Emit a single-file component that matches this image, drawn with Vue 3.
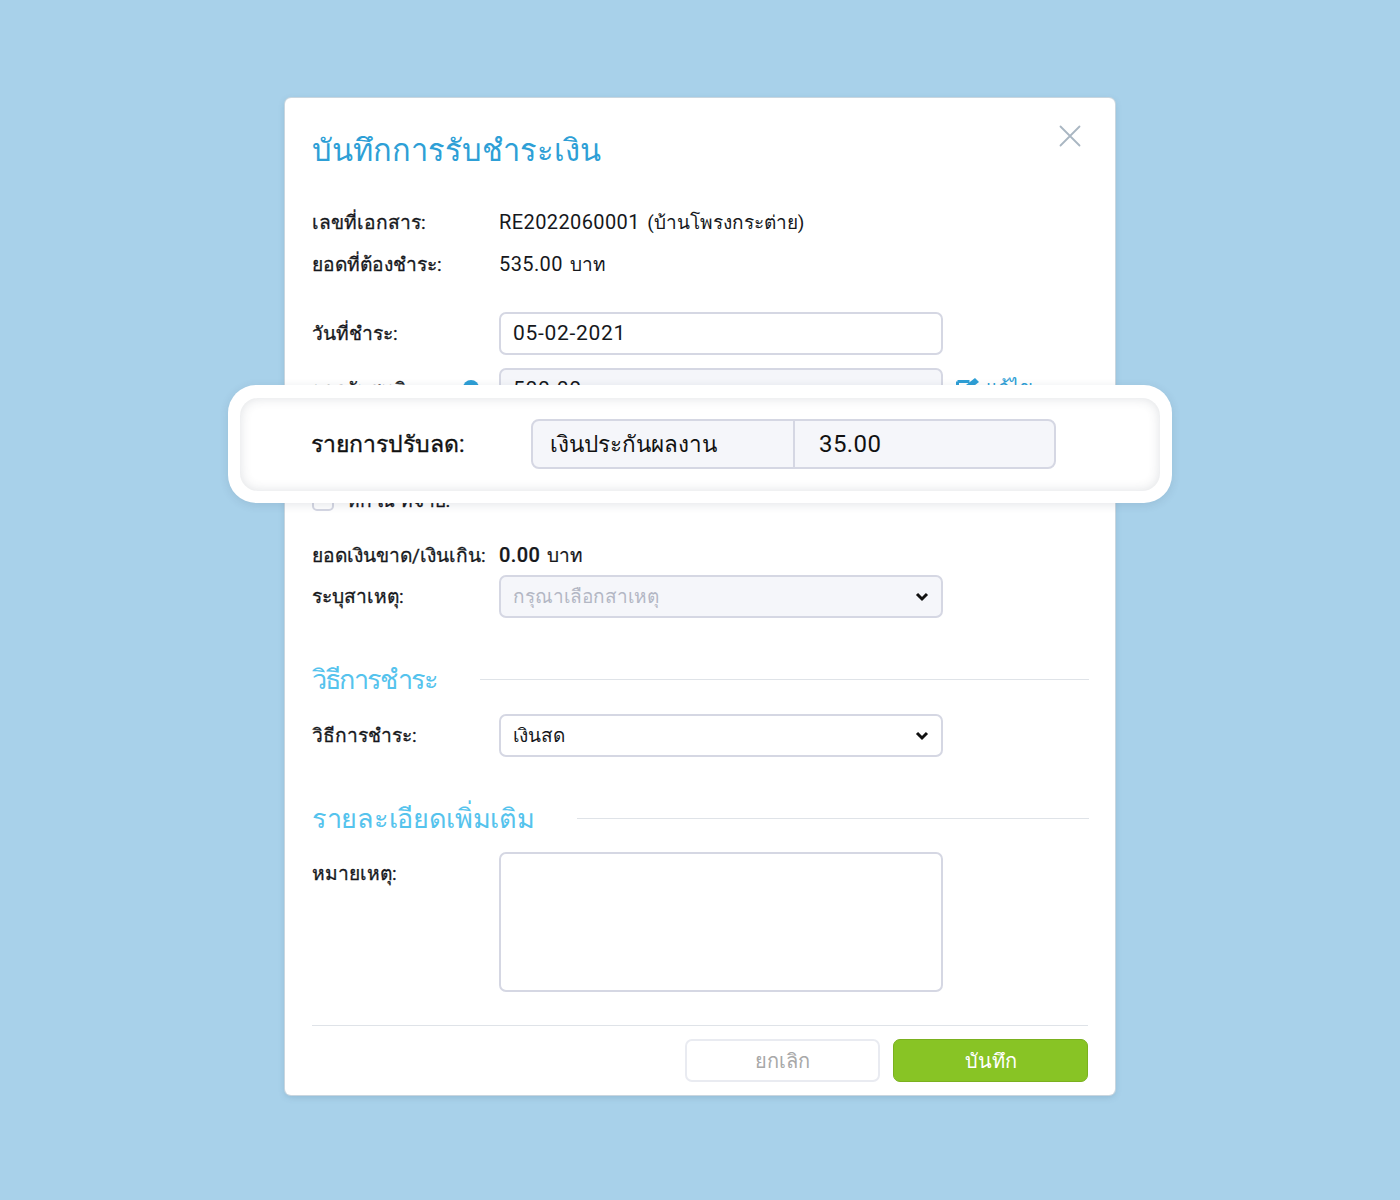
<template>
  <div class="page">
    <div class="modal">
      <div class="head">
        <h1 class="title">บันทึกการรับชำระเงิน</h1>
        <svg class="close" width="24" height="24" viewBox="0 0 24 24">
          <path d="M2.5 2.5 L21.5 21.5 M21.5 2.5 L2.5 21.5" stroke="#a9b6c2" stroke-width="1.8" fill="none" stroke-linecap="round" />
        </svg>
      </div>

      <div class="info">
        <div class="info-row">
          <span class="label">เลขที่เอกสาร:</span>
          <span class="value">RE2022060001 <span class="th">(บ้านโพรงกระต่าย)</span></span>
        </div>
        <div class="info-row">
          <span class="label">ยอดที่ต้องชำระ:</span>
          <span class="value">535.00 <span class="th">บาท</span></span>
        </div>
      </div>

      <div class="row date-row">
        <span class="label">วันที่ชำระ:</span>
        <div class="field">05-02-2021</div>
      </div>
      <div class="row">
        <span class="label net-label">ยอดรับสุทธิ: <i class="dot"></i></span>
        <div class="field disabled">500.00</div>
        <a class="edit">
          <svg width="24" height="20" viewBox="0 0 24 20">
            <path d="M1.5 4.5h12M1.5 4.5v14h15v-8" stroke="#2e9fd6" stroke-width="3" fill="none" />
            <path d="M9 12l1-4 9-7 4 4-9 7z" fill="#2e9fd6" />
          </svg>
          แก้ไข
        </a>
      </div>
      <!-- this row sits fully under the highlight strip -->
      <div class="row">
        <span class="label"></span>
        <div class="field disabled"></div>
      </div>
      <div class="check-row">
        <span class="checkbox"></span>
        <span class="label">หัก ณ ที่จ่าย:</span>
      </div>

      <div class="info-row diff-row">
        <span class="label">ยอดเงินขาด/เงินเกิน:</span>
        <span class="value strong">0.00 <span class="th">บาท</span></span>
      </div>
      <div class="row reason-row">
        <span class="label">ระบุสาเหตุ:</span>
        <div class="field disabled select placeholder">
          กรุณาเลือกสาเหตุ
          <svg class="chev" width="14" height="10" viewBox="0 0 14 10">
            <path d="M2 2l5 5 5-5" stroke="#111" stroke-width="3" fill="none" />
          </svg>
        </div>
      </div>

      <div class="section method-head">
        <h2>วิธีการชำระ</h2>
        <span class="rule"></span>
      </div>
      <div class="row">
        <span class="label">วิธีการชำระ:</span>
        <div class="field select">
          เงินสด
          <svg class="chev" width="14" height="10" viewBox="0 0 14 10">
            <path d="M2 2l5 5 5-5" stroke="#111" stroke-width="3" fill="none" />
          </svg>
        </div>
      </div>

      <div class="section detail-head">
        <h2>รายละเอียดเพิ่มเติม</h2>
        <span class="rule"></span>
      </div>
      <div class="row note-row">
        <span class="label note-label">หมายเหตุ:</span>
        <div class="field note"></div>
      </div>

      <div class="foot">
        <button class="btn cancel">ยกเลิก</button>
        <button class="btn save">บันทึก</button>
      </div>

      <div class="highlight">
        <div class="highlight-inner">
          <span class="hl-label">รายการปรับลด:</span>
          <div class="hl-group">
            <div class="hl-cell hl-name">เงินประกันผลงาน</div>
            <div class="hl-cell hl-amount">35.00</div>
          </div>
        </div>
      </div>
    </div>
  </div>
</template>

<script setup>
</script>

<style scoped>
.page {
  width: 1400px;
  height: 1200px;
  background: #a8d1ea;
  padding-top: 98px;
  box-sizing: border-box;
  font-family: Roboto, "Noto Sans", sans-serif;
  color: #16181c;
}
.modal {
  position: relative;
  width: 830px;
  height: 997px;
  margin-left: 285px;
  box-sizing: border-box;
  padding: 0 27px;
  background: #fff;
  border-radius: 6px;
  box-shadow: 0 0 0 1px #c9d6df, 0 2px 6px rgba(70, 110, 140, 0.25);
}
.head {
  display: flex;
  justify-content: space-between;
  align-items: flex-start;
  height: 109px;
}
.title {
  margin: 29px 0 0;
  font-size: 30.8px;
  line-height: 48px;
  font-weight: 400;
  color: #2e9fd6;
}
.close {
  margin: 26px 6px 0 0;
}
.info {
  display: flex;
  flex-direction: column;
  gap: 12px;
}
.info-row {
  display: flex;
  align-items: center;
  height: 30px;
}
.label {
  width: 187px;
  flex-shrink: 0;
  font-size: 19.2px;
  font-weight: 400;
  -webkit-text-stroke: 0.3px #16181c;
  white-space: nowrap;
}
.row .label {
  margin-top: -2px;
}
.value {
  font-size: 20px;
  letter-spacing: 0.4px;
  word-spacing: 2px;
}
.value.strong {
  font-weight: 500;
  word-spacing: 1px;
  -webkit-text-stroke: 0.2px #16181c;
}
.th {
  font-size: 19px;
  letter-spacing: 0;
}
.row {
  display: flex;
  align-items: center;
  margin-bottom: 13px;
}
.date-row {
  margin-top: 33px;
}
.net-label {
  position: relative;
}
.dot {
  position: absolute;
  right: 20px;
  top: 6px;
  width: 16px;
  height: 16px;
  border-radius: 50%;
  background: #2e9fd6;
}
.field {
  position: relative;
  display: flex;
  align-items: center;
  box-sizing: border-box;
  width: 444px;
  height: 43px;
  padding: 0 12px 2px;
  border: 2px solid #d5d7e3;
  border-radius: 7px;
  background: #fff;
  font-size: 21px;
  letter-spacing: 0.7px;
}
.disabled {
  background: #f5f6fa;
}
.select {
  font-size: 19px;
  letter-spacing: 0;
}
.placeholder {
  color: #b3b7c4;
}
.chev {
  position: absolute;
  right: 12px;
  top: 15px;
}
.edit {
  display: flex;
  align-items: center;
  gap: 6px;
  margin: -6px 0 0 13px;
  font-size: 19px;
  color: #2e9fd6;
}
.check-row {
  display: flex;
  align-items: center;
  gap: 13px;
  height: 22px;
  margin-top: 22px;
}
.checkbox {
  width: 22px;
  height: 22px;
  box-sizing: border-box;
  border: 2px solid #d5d7e3;
  border-radius: 5px;
}
.diff-row {
  margin-top: 29px;
  margin-bottom: 5px;
}
.reason-row {
  margin-bottom: 0;
}
.section {
  display: flex;
  align-items: center;
  height: 48px;
}
.section h2 {
  margin: 0;
  font-size: 27px;
  font-weight: 400;
  color: #55c3ed;
  white-space: nowrap;
}
.rule {
  flex: 1;
  height: 1px;
  margin: 0 -1px 0 42px;
  background: #dfe3e8;
}
.method-head {
  margin-top: 37px;
  margin-bottom: 11px;
}
.method-head h2 {
  letter-spacing: -1.8px;
}
.detail-head {
  margin-top: 37px;
  margin-bottom: 10px;
}
.detail-head h2 {
  letter-spacing: -0.3px;
}
.note-row {
  align-items: flex-start;
  margin-bottom: 0;
}
.row .note-label {
  margin-top: 6px;
}
.note {
  height: 140px;
}
.foot {
  display: flex;
  justify-content: flex-end;
  gap: 13px;
  margin-top: 33px;
  padding-top: 13px;
  border-top: 1px solid #dfe3e8;
}
.btn {
  width: 195px;
  height: 43px;
  border-radius: 7px;
  font-family: inherit;
  font-size: 20px;
}
.cancel {
  background: #fff;
  border: 2px solid #e9ebf1;
  color: #a8a8a8;
}
.save {
  background: #88c425;
  border: 1px solid #7bb11f;
  color: #fff;
}
.highlight {
  position: absolute;
  left: -57px;
  top: 287px;
  box-sizing: border-box;
  width: 944px;
  height: 118px;
  padding: 13px 12px 12px;
  background: #fff;
  border-radius: 28px;
  box-shadow: 0 2px 10px rgba(40, 60, 80, 0.12);
}
.highlight-inner {
  display: flex;
  align-items: center;
  height: 93px;
  box-sizing: border-box;
  padding-left: 71px;
  border-radius: 18px;
  background: #fff;
  box-shadow: inset 0 0 12px rgba(50, 60, 80, 0.16);
}
.hl-label {
  width: 220px;
  flex-shrink: 0;
  margin-top: -2px;
  font-size: 23px;
  font-weight: 400;
  -webkit-text-stroke: 0.35px #111;
  color: #111;
}
.hl-group {
  display: flex;
  width: 525px;
  height: 50px;
  margin-top: -1px;
  box-sizing: border-box;
  border: 2px solid #d5d7e3;
  border-radius: 8px;
  background: #f5f6fa;
}
.hl-cell {
  display: flex;
  align-items: center;
  color: #111;
}
.hl-name {
  width: 262px;
  box-sizing: border-box;
  padding-left: 17px;
  font-size: 22.5px;
  border-right: 2px solid #d5d7e3;
}
.hl-amount {
  padding-left: 24px;
  font-size: 24px;
  letter-spacing: 0.4px;
}
</style>
<style>
body { margin: 0; }
</style>
